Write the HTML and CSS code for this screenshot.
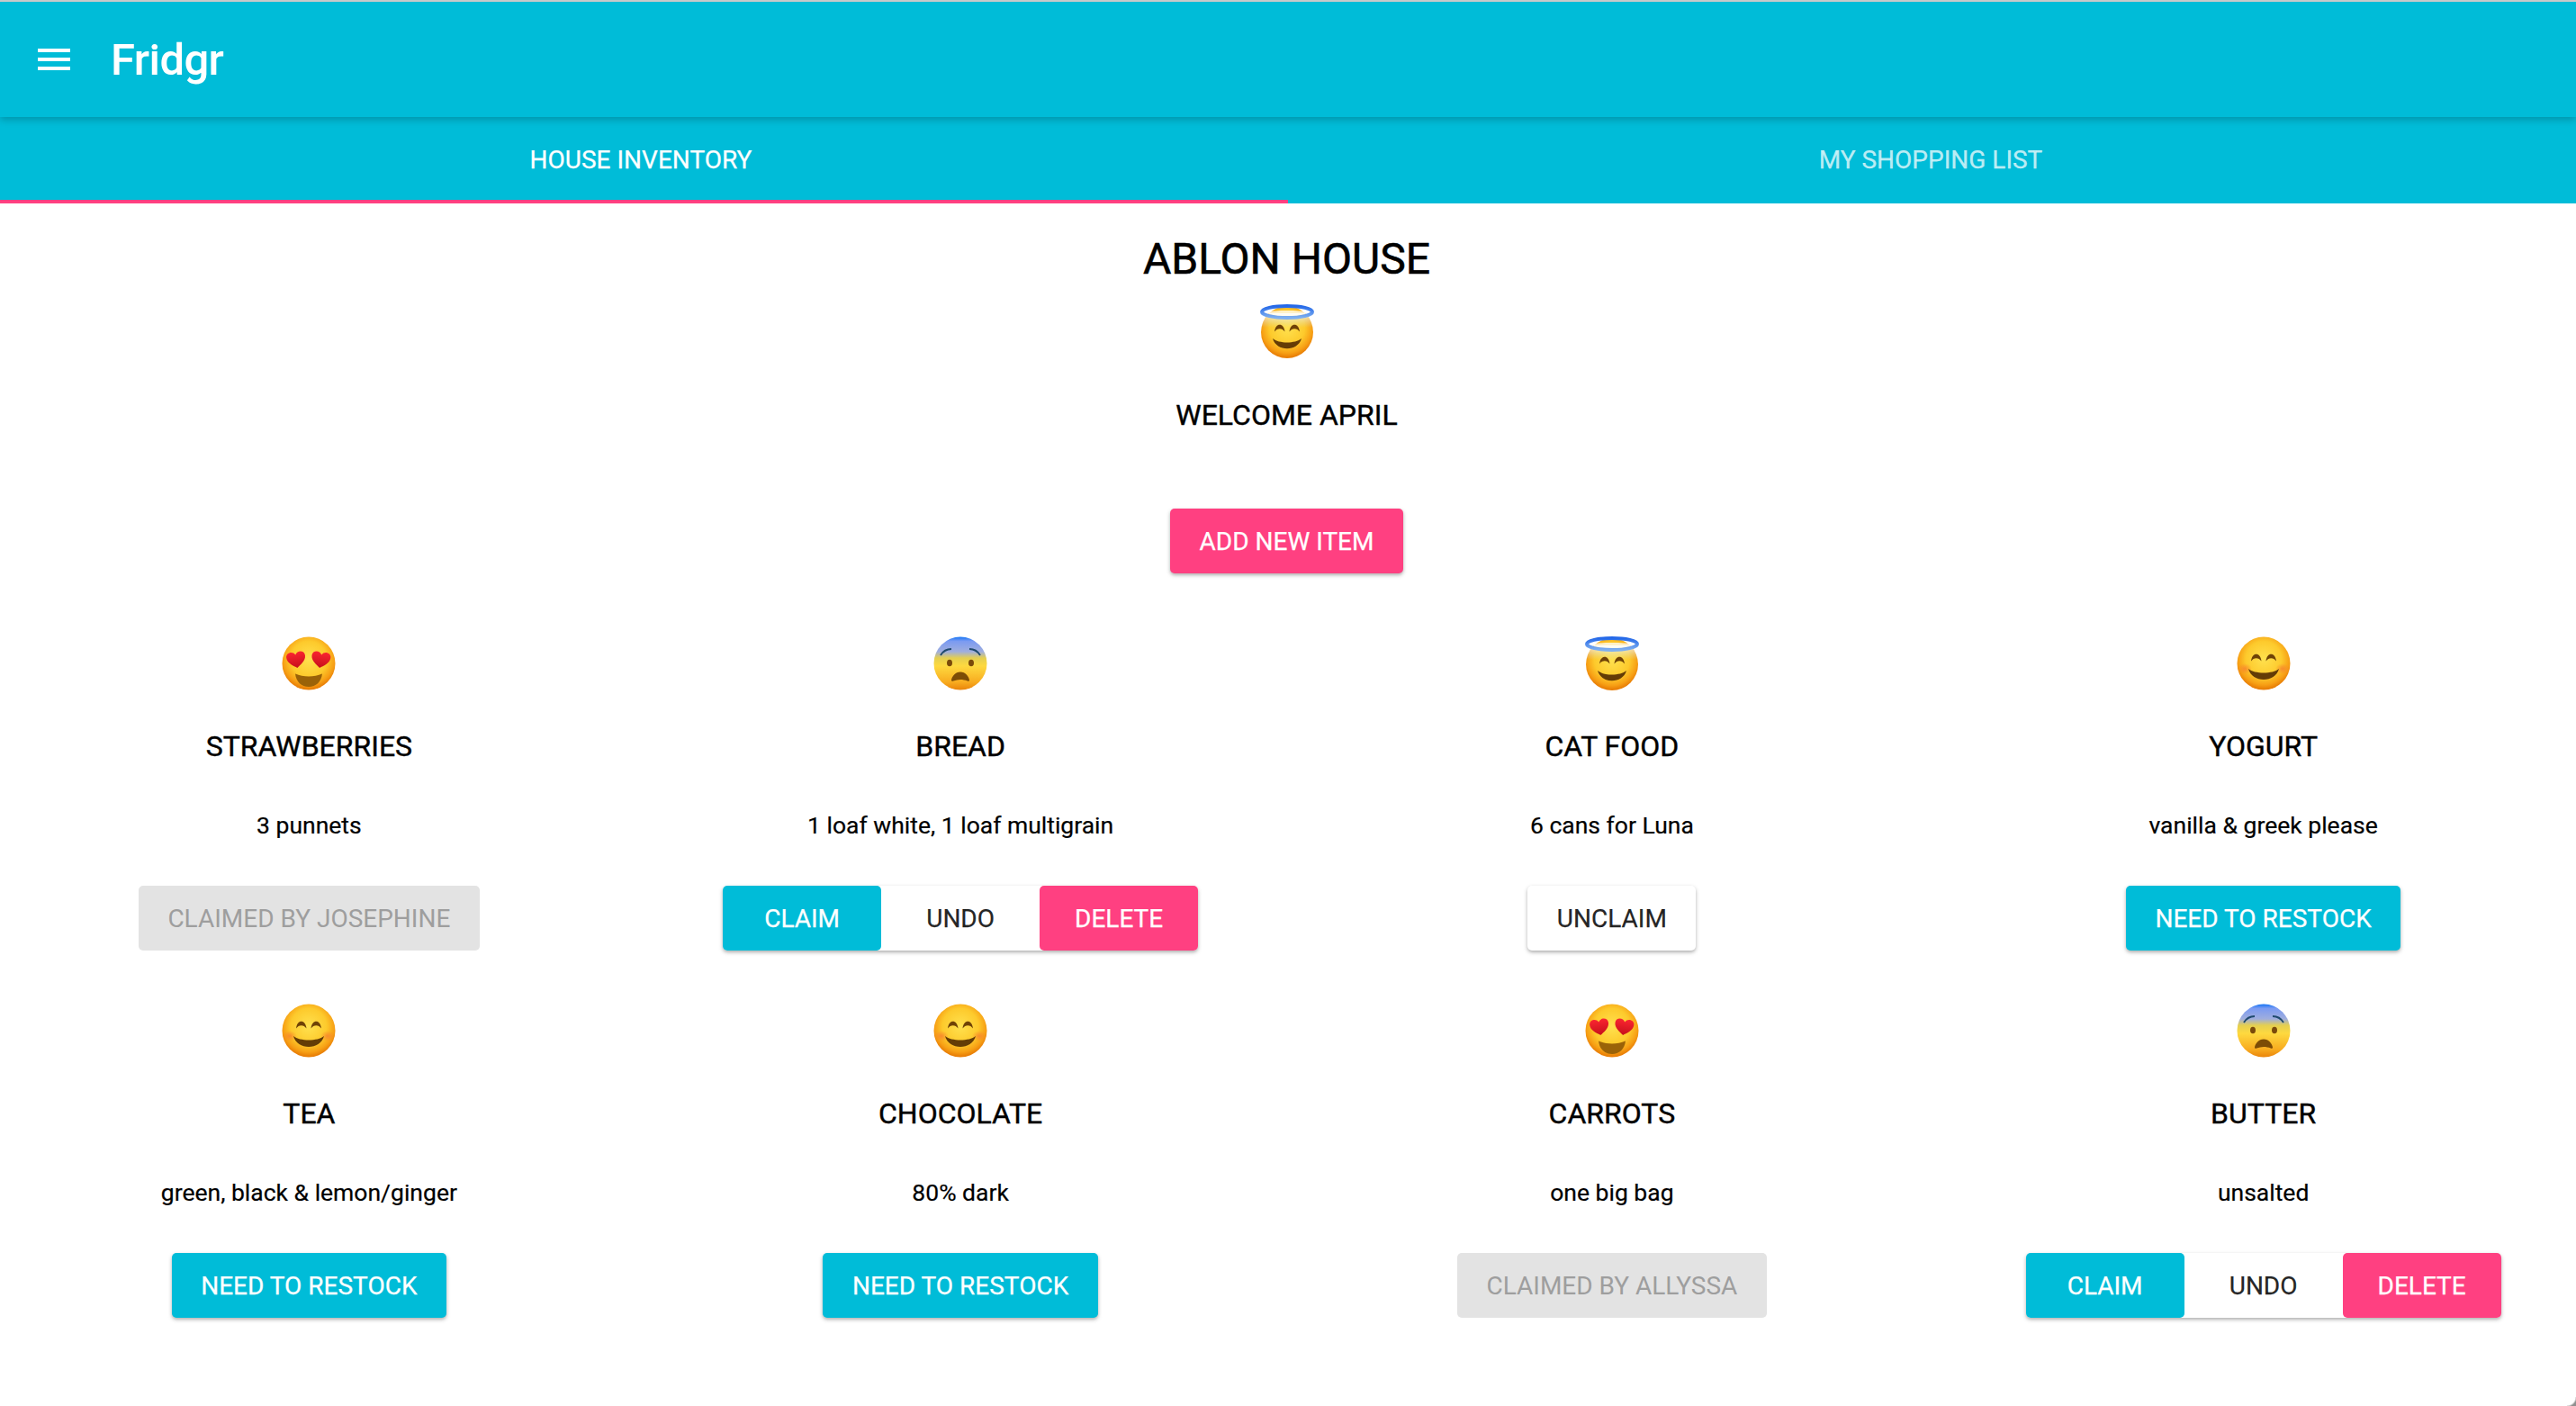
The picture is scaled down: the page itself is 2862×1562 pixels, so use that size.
FILE: index.html
```html
<!DOCTYPE html>
<html lang="en">
<head>
<meta charset="utf-8">
<title>Fridgr</title>
<link rel="stylesheet" href="styles.css">
</head>
<body>
<svg class="defs" xmlns="http://www.w3.org/2000/svg" aria-hidden="true">
  <defs>
    <radialGradient id="skin" cx="50%" cy="42%" r="56%">
      <stop offset="0" stop-color="#ffe14f"/>
      <stop offset=".6" stop-color="#fdca2c"/>
      <stop offset=".86" stop-color="#f7a015"/>
      <stop offset="1" stop-color="#e97f06"/>
    </radialGradient>
    <linearGradient id="fear" x1="0" y1="0" x2="0" y2="1">
      <stop offset="0" stop-color="#1475f5"/>
      <stop offset=".08" stop-color="#7a9af2"/>
      <stop offset=".28" stop-color="#a0aedd"/>
      <stop offset=".4" stop-color="#e4cf50"/>
      <stop offset=".55" stop-color="#fed93f"/>
      <stop offset=".85" stop-color="#f8ac20"/>
      <stop offset="1" stop-color="#ea840a"/>
    </linearGradient>
    <radialGradient id="blush" cx="50%" cy="50%" r="50%">
      <stop offset="0" stop-color="#f7812f" stop-opacity=".8"/>
      <stop offset="1" stop-color="#f7812f" stop-opacity="0"/>
    </radialGradient>
    <linearGradient id="heart" x1="0" y1="0" x2="0" y2="1">
      <stop offset="0" stop-color="#fa2530"/>
      <stop offset="1" stop-color="#c60f1b"/>
    </linearGradient>
    <linearGradient id="halo-glow" x1="0" y1="0" x2="0" y2="1">
      <stop offset="0" stop-color="#ffffff" stop-opacity=".85"/>
      <stop offset="1" stop-color="#cfe6ee" stop-opacity="0"/>
    </linearGradient>
    <linearGradient id="halo-ring" x1="0" y1="0" x2="0" y2="1">
      <stop offset="0" stop-color="#2468e8"/>
      <stop offset="1" stop-color="#7fb0f0"/>
    </linearGradient>
    <clipPath id="face-clip"><circle cx="30" cy="31" r="29"/></clipPath>
    <symbol id="e-smile" viewBox="0 0 60 60">
      <circle cx="30" cy="30" r="29.500" fill="url(#skin)"/>
      <ellipse cx="9" cy="36" rx="8" ry="6" fill="url(#blush)"/>
      <ellipse cx="51" cy="36" rx="8" ry="6" fill="url(#blush)"/>
      <path d="M16 27.500c1-10.500 10.500-10.500 11.500 0-3-4.500-8.500-4.500-11.500 0zM32.500 27.500c1-10.500 10.500-10.500 11.500 0-3-4.500-8.500-4.500-11.500 0z" fill="#6f4206"/>
      <path d="M13 36c4 16 30 16 34 0-7 6-27 6-34 0z" fill="#643c06"/>
    </symbol>
    <symbol id="e-halo" viewBox="0 0 60 60">
      <circle cx="30" cy="31" r="29" fill="url(#skin)"/>
      <path d="M2 10h56v16H2z" fill="url(#halo-glow)" clip-path="url(#face-clip)"/>
      <path d="M16 30.500c1-10.500 10.500-10.500 11.500 0-3-4.500-8.500-4.500-11.500 0zM32.500 30.500c1-10.500 10.500-10.500 11.500 0-3-4.500-8.500-4.500-11.500 0z" fill="#6f4206"/>
      <path d="M14 38c4 15 28 15 32 0-7 6-25 6-32 0z" fill="#643c06"/>
      <path d="M8 8.500c8-2 36-2 44 0-4 7-40 7-44 0z" fill="#ffffff" fill-opacity=".75"/>
      <ellipse cx="30" cy="8.500" rx="28" ry="6.500" fill="none" stroke="url(#halo-ring)" stroke-width="4"/>
    </symbol>
    <symbol id="e-love" viewBox="0 0 60 60">
      <circle cx="30" cy="30" r="29.500" fill="url(#skin)"/>
      <path d="M15 41.500c9 4 21 4 30 0-1 9-7 14.500-15 14.500s-14-5.500-15-14.500z" fill="#9a6208"/>
      <path transform="translate(5.500 17.500) rotate(-8 10.500 8)" d="M0 5C0-1 8-2 10.500 3 13-2 21-1 21 5c0 6-7 10-10.500 12.500C7 15 0 11 0 5z" fill="url(#heart)"/>
      <path transform="translate(33 17.500) rotate(8 10.500 8)" d="M0 5C0-1 8-2 10.500 3 13-2 21-1 21 5c0 6-7 10-10.500 12.500C7 15 0 11 0 5z" fill="url(#heart)"/>
    </symbol>
    <symbol id="e-fear" viewBox="0 0 60 60">
      <circle cx="30" cy="30" r="29.500" fill="url(#fear)"/>
      <path d="M8 21c3-5 7-7 12-7M52 21c-3-5-7-7-12-7" fill="none" stroke="#1f4a6e" stroke-width="2"/>
      <ellipse cx="18" cy="29.500" rx="3" ry="3.800" fill="#7a4a0a"/>
      <ellipse cx="42" cy="29.500" rx="3" ry="3.800" fill="#7a4a0a"/>
      <path d="M30 39.500c5.500 0 9.500 5 10 9 0 1.300-1 1.500-2.200 1-5-2-10.600-2-15.600 0-1.200.5-2.200.3-2.200-1 .5-4 4.500-9 10-9z" fill="#7c4c06"/>
    </symbol>
  </defs>
</svg>

<header class="appbar">
  <svg class="menu-icon" viewBox="0 0 24 24" aria-label="Menu"><path d="M3 18h18v-2H3v2zm0-5h18v-2H3v2zm0-7v2h18V6H3z"/></svg>
  <span class="brand">Fridgr</span>
</header>

<nav class="tabs">
  <div class="tab tab-active">HOUSE INVENTORY</div>
  <div class="tab tab-idle">MY SHOPPING LIST</div>
</nav>

<main class="page">
  <section class="hero">
    <h1 class="house">ABLON HOUSE</h1>
    <svg class="emoji emoji-hero"><use href="#e-halo"/></svg>
    <h2 class="welcome">WELCOME APRIL</h2>
    <button class="btn btn-pink btn-add">ADD NEW ITEM</button>
  </section>

  <section class="items">
    <article class="item">
      <svg class="emoji"><use href="#e-love"/></svg>
      <h3 class="item-name">STRAWBERRIES</h3>
      <p class="item-note">3 punnets</p>
      <button class="btn btn-disabled">CLAIMED BY JOSEPHINE</button>
    </article>
    <article class="item">
      <svg class="emoji"><use href="#e-fear"/></svg>
      <h3 class="item-name">BREAD</h3>
      <p class="item-note">1 loaf white, 1 loaf multigrain</p>
      <div class="btn-group">
        <button class="btn btn-cyan">CLAIM</button>
        <button class="btn btn-white">UNDO</button>
        <button class="btn btn-pink">DELETE</button>
      </div>
    </article>
    <article class="item">
      <svg class="emoji"><use href="#e-halo"/></svg>
      <h3 class="item-name">CAT FOOD</h3>
      <p class="item-note">6 cans for Luna</p>
      <button class="btn btn-white">UNCLAIM</button>
    </article>
    <article class="item">
      <svg class="emoji"><use href="#e-smile"/></svg>
      <h3 class="item-name">YOGURT</h3>
      <p class="item-note">vanilla &amp; greek please</p>
      <button class="btn btn-cyan">NEED TO RESTOCK</button>
    </article>
    <article class="item">
      <svg class="emoji"><use href="#e-smile"/></svg>
      <h3 class="item-name">TEA</h3>
      <p class="item-note">green, black &amp; lemon/ginger</p>
      <button class="btn btn-cyan">NEED TO RESTOCK</button>
    </article>
    <article class="item">
      <svg class="emoji"><use href="#e-smile"/></svg>
      <h3 class="item-name">CHOCOLATE</h3>
      <p class="item-note">80% dark</p>
      <button class="btn btn-cyan">NEED TO RESTOCK</button>
    </article>
    <article class="item">
      <svg class="emoji"><use href="#e-love"/></svg>
      <h3 class="item-name">CARROTS</h3>
      <p class="item-note">one big bag</p>
      <button class="btn btn-disabled">CLAIMED BY ALLYSSA</button>
    </article>
    <article class="item">
      <svg class="emoji"><use href="#e-fear"/></svg>
      <h3 class="item-name">BUTTER</h3>
      <p class="item-note">unsalted</p>
      <div class="btn-group">
        <button class="btn btn-cyan">CLAIM</button>
        <button class="btn btn-white">UNDO</button>
        <button class="btn btn-pink">DELETE</button>
      </div>
    </article>
  </section>
</main>
</body>
</html>
```

FILE: styles.css
```css
* { box-sizing: border-box; }

html, body {
  margin: 0;
  height: 100%;
  overflow: hidden;
  background: #fff;
}

body {
  font-family: Roboto, "Liberation Sans", sans-serif;
  color: #000;
  border-top: 2px solid #c9c9c9;
}

body::after {
  content: "";
  position: fixed;
  right: 0;
  bottom: 0;
  width: 10px;
  height: 10px;
  background: radial-gradient(circle at 0 0, transparent 9px, #8f8f8f 11px);
}

.defs {
  position: absolute;
  width: 0;
  height: 0;
}

.appbar {
  display: flex;
  align-items: center;
  height: 128px;
  padding-left: 36px;
  background: #00bcd8;
  box-shadow: 0 3px 8px rgba(0, 0, 0, 0.22);
  position: relative;
  z-index: 1;
}

.menu-icon {
  width: 48px;
  height: 48px;
  fill: #fff;
  margin-right: 39px;
}

.brand {
  color: #fff;
  font-size: 49px;
  font-weight: 500;
  line-height: 1;
  letter-spacing: -0.6px;
}

.tabs {
  display: grid;
  grid-template-columns: 1431px 1431px;
  height: 96px;
  background: #00bcd8;
}

.tab {
  display: flex;
  align-items: center;
  justify-content: center;
  padding-top: 2px;
  font-size: 28px;
  font-weight: 400;
  -webkit-text-stroke: 0.25px currentColor;
  color: rgba(255, 255, 255, 0.72);
  border-bottom: 4px solid transparent;
}

.tab-active {
  color: #fff;
  border-bottom-color: #ff4081;
  padding-right: 7px;
}

.tab-idle {
  padding-right: 3px;
}

.page {
  display: flex;
  flex-direction: column;
}

.hero {
  display: flex;
  flex-direction: column;
  align-items: center;
  padding-right: 3px;
}

.house {
  margin: 33px 0 0;
  font-size: 48px;
  font-weight: 400;
  line-height: 58px;
  -webkit-text-stroke: 0.6px #000;
}

.emoji {
  display: block;
  width: 60px;
  height: 60px;
}

.emoji-hero {
  margin-top: 21px;
}

.welcome {
  margin: 40px 0 0;
  font-size: 32px;
  font-weight: 400;
  line-height: 46px;
  -webkit-text-stroke: 0.4px #000;
}

.btn-add {
  margin-top: 81px;
  padding: 0 32px;
}

.items {
  display: grid;
  grid-template-columns: repeat(4, 723.75px);
  margin: 70px -13.500px 0 -18.500px;
}

.item {
  display: flex;
  flex-direction: column;
  align-items: center;
  height: 408px;
}

.item-name {
  margin: 40px 0 0;
  font-size: 32px;
  font-weight: 400;
  line-height: 44px;
  -webkit-text-stroke: 0.4px #000;
}

.item-note {
  margin: 44px 0 0;
  font-size: 26.500px;
  line-height: 44px;
  -webkit-text-stroke: 0.2px #000;
}

.btn {
  display: block;
  height: 72px;
  padding: 0 32.500px;
  border: 0;
  border-radius: 5px;
  font-family: inherit;
  font-size: 28px;
  font-weight: 400;
  -webkit-text-stroke: 0.25px currentColor;
  box-shadow: 0 2px 5px rgba(0, 0, 0, 0.22), 0 2px 3px rgba(0, 0, 0, 0.12);
}

.item > .btn,
.btn-group {
  margin-top: 45px;
}

.btn-group {
  display: grid;
  grid-template-columns: repeat(3, 176px);
  border-radius: 5px;
  box-shadow: 0 2px 5px rgba(0, 0, 0, 0.22), 0 2px 3px rgba(0, 0, 0, 0.12);
}

.btn-group .btn {
  padding: 0;
  box-shadow: none;
}

.btn-group .btn-white {
  border-radius: 0;
}

.btn-pink { background: #ff4081; color: #fff; }
.btn-cyan { background: #00bcd8; color: #fff; }
.btn-white { background: #fff; color: rgba(0, 0, 0, 0.87); }

.btn-disabled {
  background: #e3e3e3;
  color: #9e9e9e;
  -webkit-text-stroke: 0;
  box-shadow: none;
}
```
